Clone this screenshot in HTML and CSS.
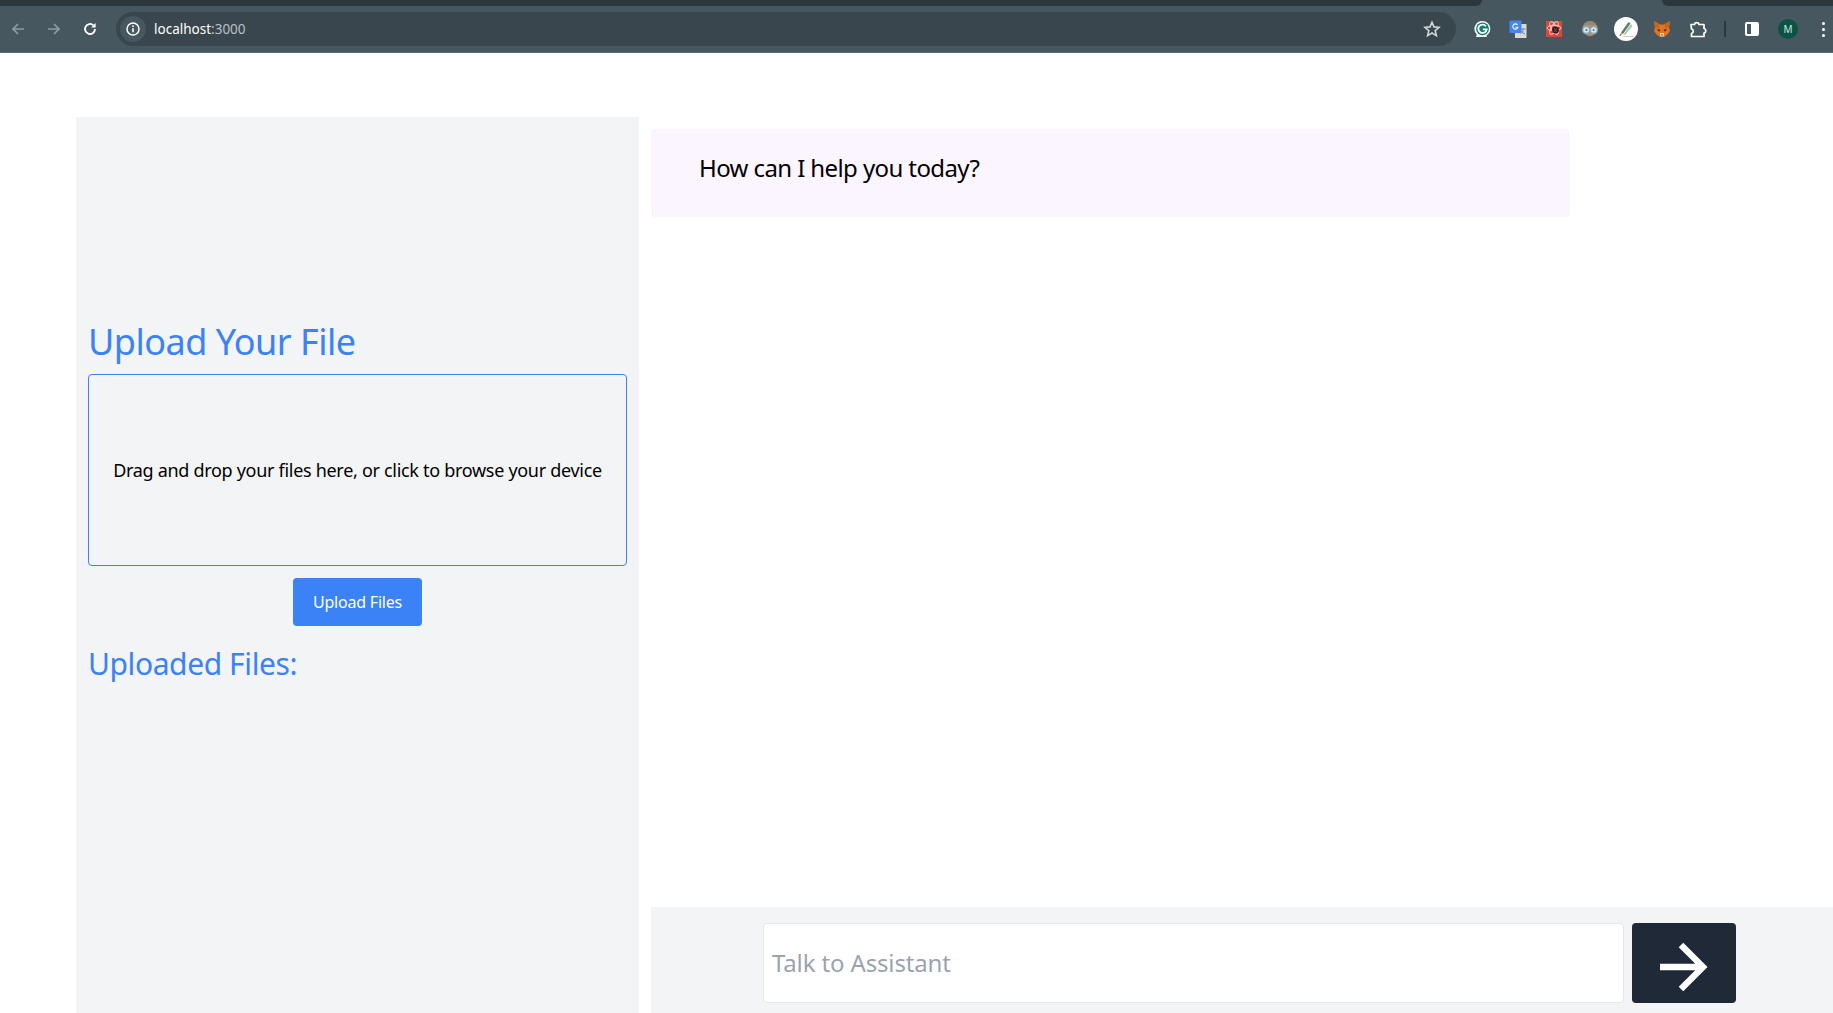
FILE: index.html
```html
<!DOCTYPE html>
<html lang="en">
<head>
    <meta charset="UTF-8">
    <title>localhost:3000</title>
    <link rel="stylesheet" href="styles.css">
</head>
<body>
<div class="tabstrip">
    <div class="tabLeft"></div>
    <div class="tabRight"></div>
</div>
<div class="toolbar">
    <svg class="navIcon" width="16" height="16" viewBox="0 0 16 16"><path d="M14 8H3M8 3L3 8l5 5" fill="none" stroke="#8f9ca4" stroke-width="1.7"/></svg>
    <svg class="navIcon" width="16" height="16" viewBox="0 0 16 16"><path d="M2 8h11M8 3l5 5-5 5" fill="none" stroke="#8f9ca4" stroke-width="1.7"/></svg>
    <svg class="navIcon" width="16" height="16" viewBox="0 0 16 16"><path d="M13 8a5 5 0 1 1-1.6-3.7" fill="none" stroke="#fff" stroke-width="1.8"/><path d="M13.6 2v4.4H9.2z" fill="#fff"/></svg>
    <div class="omnibox">
        <div class="infoChip">
            <svg width="16" height="16" viewBox="0 0 16 16"><circle cx="8" cy="8" r="6" fill="none" stroke="#fff" stroke-width="1.5"/><path d="M8 7.2v4M8 4.6v1.5" stroke="#fff" stroke-width="1.6"/></svg>
        </div>
        <span class="url">localhost<span class="urlPort">:3000</span></span>
        <svg class="star" width="18" height="18" viewBox="0 0 18 18"><path d="M9 2.2l2 4.7 5.1.4-3.9 3.3 1.2 5L9 13l-4.4 2.6 1.2-5-3.900-3.300 5.100-.4z" fill="none" stroke="#cfd6da" stroke-width="1.6"/></svg>
    </div>
    <div class="extensions">
        <!-- grammarly -->
        <svg width="18" height="18" viewBox="0 0 18 18"><path d="M9.500 1a7.800 7.800 0 0 1 7.800 7.800c0 3-1.500 5.400-3.800 6.800l.3 1.400H3l.8-2.600A7.800 7.800 0 0 1 9.500 1z" fill="#f1f7f5"/><circle cx="9.500" cy="8.800" r="6.400" fill="#0c7f68"/><path d="M12.900 6.200a4.200 4.200 0 1 0 .8 3.200H9.800" fill="none" stroke="#fff" stroke-width="1.800"/></svg>
        <!-- translate -->
        <svg width="18" height="18" viewBox="0 0 18 18"><rect x="6" y="4" width="11.500" height="14" fill="#d9dcde"/><path d="M11.500 9h5M14 9v1c0 2-1 3-2.500 4M12.500 11c.6 1.500 2 2.500 3.500 3" fill="none" stroke="#7b8388" stroke-width="1"/><rect x="0.500" y="0.500" width="12" height="12.500" rx="1" fill="#4285f4"/><path d="M8.500 5a2.600 2.600 0 1 0 .4 2.200H6.500" fill="none" stroke="#fff" stroke-width="1.100"/></svg>
        <!-- react devtools style badge -->
        <svg width="18" height="18" viewBox="0 0 18 18"><rect x="1" y="1" width="16" height="16" fill="#d9483b"/><ellipse cx="9" cy="8" rx="7" ry="2.700" fill="none" stroke="#f6c9c4" stroke-width="1" transform="rotate(60 9 8)"/><ellipse cx="9" cy="8" rx="7" ry="2.700" fill="none" stroke="#f6c9c4" stroke-width="1" transform="rotate(-60 9 8)"/><ellipse cx="9" cy="8" rx="7" ry="2.700" fill="none" stroke="#f6c9c4" stroke-width="1"/><circle cx="10.500" cy="10" r="3.400" fill="#2b1a1a"/><path d="M9 8l3 4M12 8l-3 4" stroke="#a8665c" stroke-width=".7"/></svg>
        <!-- owl -->
        <svg width="18" height="18" viewBox="0 0 18 18"><circle cx="9" cy="8.500" r="7.500" fill="#b08f72"/><path d="M3 5a7 7 0 0 1 12 0z" fill="#8f8a70"/><circle cx="5.200" cy="10" r="3.400" fill="#dbe6e8" stroke="#86aeb9" stroke-width="1.200"/><circle cx="12.800" cy="10" r="3.400" fill="#dbe6e8" stroke="#86aeb9" stroke-width="1.200"/><circle cx="5.400" cy="10" r="1" fill="#566"/><circle cx="12.600" cy="10" r="1" fill="#566"/><path d="M6.500 15h5L9 16.500z" fill="#d9744f"/></svg>
        <!-- pen -->
        <svg class="penBadge" width="24" height="24" viewBox="0 0 24 24"><circle cx="12" cy="12" r="12" fill="#fff"/><path d="M7 15.500L14.500 5l2 1.500-7.500 10.500z" fill="#55806c"/><path d="M9.500 17.500L17 7l1.500 2-7.500 9z" fill="#a3c6b2"/><path d="M5.500 19l1.500-3.500 2 1.500z" fill="#e0a030"/><path d="M5.500 19l.7-1.700 1 .7z" fill="#2b3a55"/><path d="M9 19.500h11" stroke="#c8cdd0"/></svg>
        <!-- fox -->
        <svg width="18" height="18" viewBox="0 0 18 18"><path d="M1 1l6 3.500h4L17 1l-1 6.500 1 3.500-2.500 3.500L11 17H7l-3.500-2.500L1 11l1-3.500z" fill="#e2761b"/><path d="M1 1l6 3.500-1.500 4-3.500-1zM17 1l-6 3.500 1.500 4 3.500-1z" fill="#c9651a"/><path d="M4 9l3.500.8-1.500 2zM14 9l-3.500.8 1.500 2z" fill="#3a2a20"/><path d="M7 13h4l-.5 3.500h-3z" fill="#eadfd2"/><path d="M8 14.500h2L9 16z" fill="#2b2320"/></svg>
        <!-- puzzle piece -->
        <svg width="18" height="18" viewBox="0 0 18 18"><path d="M2 4.500h3.500a2.300 2.300 0 0 1 4.500 0H15V8.500a2.300 2.300 0 0 1 0 4.500v3.500H2.500V13.500a2.300 2.300 0 0 0 0-4.500z" fill="none" stroke="#fff" stroke-width="1.700" stroke-linejoin="round"/></svg>
    </div>
    <div class="divider"></div>
    <div class="sidePanelIcon"><span class="sidePanelFill"></span></div>
    <div class="avatar">M</div>
    <div class="kebab"><span></span><span></span><span></span></div>
</div>
<div class="page">
    <aside class="sidebar">
        <h1 class="uploadTitle">Upload Your File</h1>
        <div class="dropzone">Drag and drop your files here, or click to browse your device</div>
        <button class="uploadBtn">Upload Files</button>
        <h2 class="uploadedTitle">Uploaded Files:</h2>
    </aside>
    <main class="chat">
        <div class="messages">
            <div class="message">How can I help you today?</div>
        </div>
        <div class="inputBar">
            <input class="chatInput" type="text" placeholder="Talk to Assistant">
            <button class="sendBtn">
                <svg width="56" height="56" viewBox="0 0 56 56"><path d="M4 28h43M25 6l22 22-22 22" fill="none" stroke="#fff" stroke-width="6.400"/></svg>
            </button>
        </div>
    </main>
</div>
</body>
</html>
```

FILE: styles.css
```css
* {
    box-sizing: border-box;
}

html, body {
    height: 100%;
}

body {
    margin: 0;
    display: flex;
    flex-direction: column;
    overflow: hidden;
    background: #fff;
    font-family: "Noto Sans", "Open Sans", sans-serif;
}

.tabstrip {
    height: 6px;
    flex: none;
    display: flex;
    justify-content: space-between;
    background: #47575f;
}

.tabLeft {
    width: 1482px;
    background: #2c373d;
    border-bottom-right-radius: 8px;
}

.tabRight {
    width: 171px;
    background: #2c373d;
    border-bottom-left-radius: 8px;
}

.toolbar {
    height: 47px;
    flex: none;
    display: flex;
    align-items: center;
    padding: 0 0 0 10px;
    background: #47575f;
    border-bottom: 1px solid #5d6a71;
}

.navIcon {
    margin-right: 20px;
    flex: none;
}

.omnibox {
    width: 1340px;
    height: 34px;
    margin-left: -2px;
    flex: none;
    display: flex;
    align-items: center;
    padding: 0 15px 0 4px;
    border-radius: 17px;
    background: #3a464d;
}

.infoChip {
    width: 26px;
    height: 26px;
    display: flex;
    align-items: center;
    justify-content: center;
    border-radius: 50%;
    background: #47575f;
}

.url {
    margin-left: 8px;
    flex: 1;
    font-size: 13.500px;
    color: #fff;
}

.urlPort {
    color: #b6c0c5;
}

.extensions {
    display: flex;
    align-items: center;
    gap: 18px;
    margin-left: 17px;
}

.penBadge {
    margin: 0 -3px;
}

.divider {
    width: 2px;
    height: 16px;
    margin-left: 17px;
    background: #2c373d;
}

.sidePanelIcon {
    width: 14px;
    height: 14px;
    margin-left: 19px;
    border: 2px solid #fff;
    border-radius: 2px;
    display: flex;
    justify-content: flex-end;
}

.sidePanelFill {
    width: 6px;
    background: #fff;
}

.avatar {
    width: 20px;
    height: 20px;
    margin-left: 19px;
    border-radius: 50%;
    background: #0b5345;
    color: #cfe5df;
    font-size: 10px;
    line-height: 20px;
    text-align: center;
}

.kebab {
    margin-left: 24px;
    display: flex;
    flex-direction: column;
    gap: 3px;
}

.kebab span {
    width: 3px;
    height: 3px;
    border-radius: 50%;
    background: #fff;
}

.page {
    flex: 1;
    min-height: 0;
    display: flex;
    gap: 12px;
    padding: 64px 0 0 76px;
}

.sidebar {
    width: 563px;
    flex: none;
    display: flex;
    flex-direction: column;
    padding: 205px 12px 0;
    background: #f3f4f6;
}

.uploadTitle {
    margin: 0;
    font-size: 36px;
    line-height: 40px;
    font-weight: 400;
    letter-spacing: -0.5px;
    color: #3b82f6;
}

.dropzone {
    height: 192px;
    margin-top: 12px;
    display: flex;
    align-items: center;
    justify-content: center;
    border: 1px solid #3b82f6;
    border-radius: 4px;
    font-size: 18px;
    letter-spacing: -0.3px;
    color: #000;
}

.uploadBtn {
    align-self: center;
    width: 129px;
    height: 48px;
    margin-top: 12px;
    border: 0;
    border-radius: 4px;
    background: #3b82f6;
    color: #fff;
    font-family: inherit;
    font-size: 16px;
    letter-spacing: -0.2px;
}

.uploadedTitle {
    margin: 20px 0 0;
    font-size: 30px;
    line-height: 36px;
    font-weight: 400;
    letter-spacing: -0.4px;
    color: #3b82f6;
}

.chat {
    flex: 1;
    min-width: 0;
    display: flex;
    flex-direction: column;
    margin-top: -64px;
    padding-top: 76px;
}

.messages {
    flex: 1;
}

.message {
    width: 919px;
    height: 88px;
    padding: 23px 48px;
    border-radius: 4px;
    background: #faf5ff;
    font-size: 24px;
    line-height: 32px;
    letter-spacing: -0.6px;
    color: #000;
}

.inputBar {
    height: 106px;
    flex: none;
    display: flex;
    gap: 8px;
    padding: 16px 97px 10px 112px;
    background: #f3f4f6;
}

.chatInput {
    flex: 1;
    min-width: 0;
    height: 80px;
    padding: 0 8px 2px;
    border: 1px solid #e5e7eb;
    border-radius: 4px;
    background: #fff;
    font-family: inherit;
    font-size: 24px;
    letter-spacing: -0.14px;
    outline: none;
}

.chatInput::placeholder {
    color: #9ca3af;
}

.sendBtn {
    width: 104px;
    height: 80px;
    flex: none;
    display: flex;
    align-items: center;
    justify-content: center;
    padding: 8px 0 0;
    border: 0;
    border-radius: 4px;
    background: #1f2937;
}
```
